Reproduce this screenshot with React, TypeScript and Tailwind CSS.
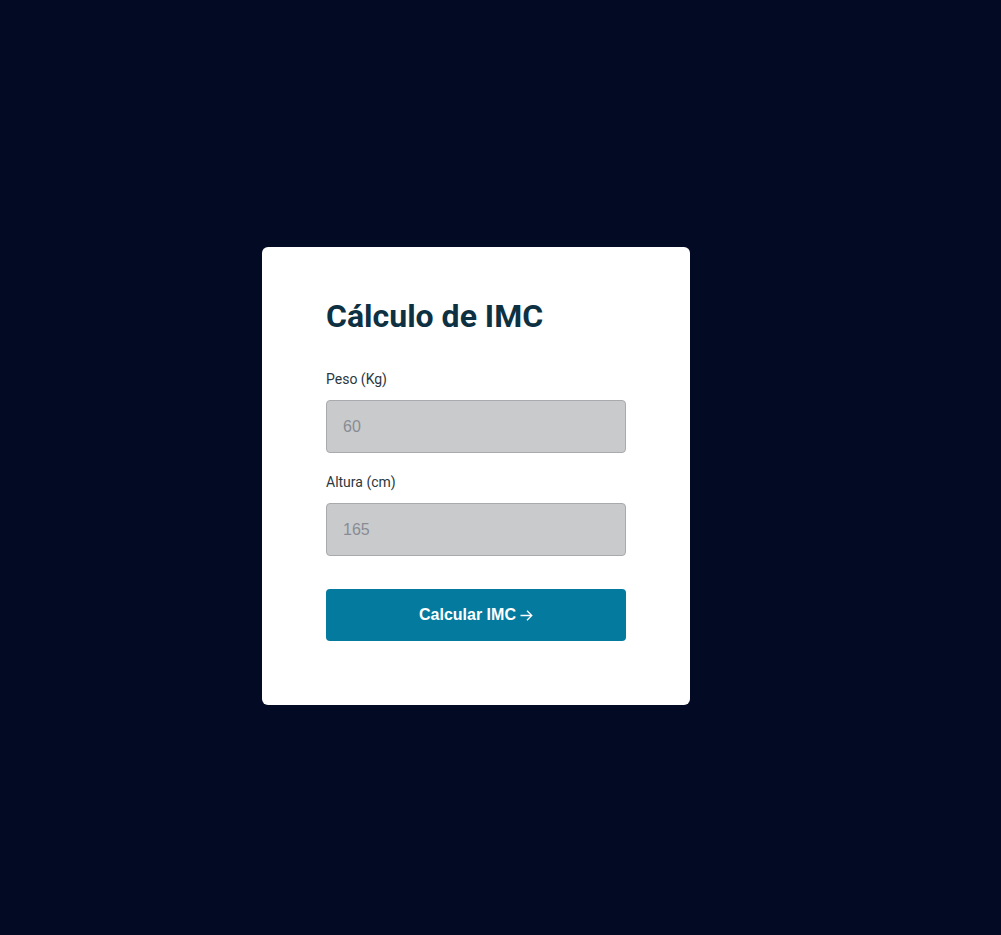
export default function App() {
  return (
    <div className="min-h-screen w-full bg-[#030a24] flex items-center justify-center pr-[49px] pt-[17px]">
      <div className="w-[428px] bg-white rounded-md px-16 pt-[49px] pb-16">
        <h1 className="font-['Roboto',sans-serif] text-[32px] leading-10 font-bold text-[#0d3142]">
          Cálculo de IMC
        </h1>
        <form className="mt-[33px] flex flex-col" onSubmit={(e) => e.preventDefault()}>
          <label className="font-['Roboto',sans-serif] text-sm leading-5 text-[#2b3740]">Peso (Kg)</label>
          <input
            type="number"
            placeholder="60"
            className="mt-[11px] h-[53px] w-full rounded bg-[#c9cacc] border border-[#a9aaad] px-4 font-['Liberation_Sans',Arial,sans-serif] text-base text-[#333] placeholder:text-[#888c94] outline-none"
          />
          <label className="mt-[19px] font-['Roboto',sans-serif] text-sm leading-5 text-[#2b3740]">Altura (cm)</label>
          <input
            type="number"
            placeholder="165"
            className="mt-[11px] h-[53px] w-full rounded bg-[#c9cacc] border border-[#a9aaad] px-4 font-['Liberation_Sans',Arial,sans-serif] text-base text-[#333] placeholder:text-[#888c94] outline-none"
          />
          <button
            type="submit"
            className="mt-[33px] h-[52px] w-full rounded bg-[#037a9e] text-white font-['Liberation_Sans',Arial,sans-serif] text-base font-bold flex items-center justify-center gap-1"
          >
            Calcular IMC
            <svg width="13" height="11" viewBox="0 0 13 11" fill="none" stroke="currentColor" strokeWidth="1.3" className="mt-px">
              <path d="M0.5 5.5H12M7 0.8L11.8 5.5L7 10.2" />
            </svg>
          </button>
        </form>
      </div>
    </div>
  );
}
